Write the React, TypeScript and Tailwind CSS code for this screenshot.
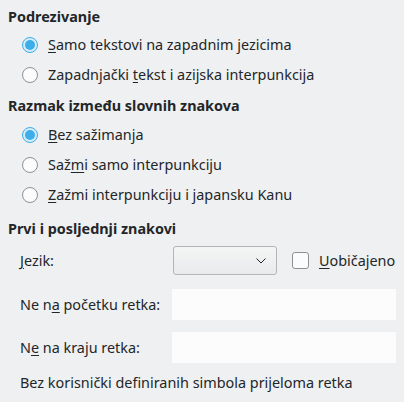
import { type FC, type ReactNode } from "react";

const Radio: FC<{ checked?: boolean; children: ReactNode }> = ({ checked, children }) => (
  <div className="flex items-center h-[30px] pl-[14px] gap-[10px]">
    {checked ? (
      <span className="w-[16px] h-[16px] rounded-full border border-[#3daee9] bg-[#d6ecf8] flex items-center justify-center">
        <span className="w-[10px] h-[10px] rounded-full bg-[#3daee9]" />
      </span>
    ) : (
      <span className="w-[16px] h-[16px] rounded-full border border-[#8e9091] bg-[#fcfcfc]" />
    )}
    <span>{children}</span>
  </div>
);

const U: FC<{ children: ReactNode }> = ({ children }) => <span className="underline underline-offset-2">{children}</span>;

const App: FC = () => {
  return (
    <div className="w-[404px] h-[402px] bg-[#eff0f1] text-[#232629] text-[14.4px] leading-[20px] overflow-hidden" style={{ fontFamily: '"Noto Sans", sans-serif' }}>
      <div className="pt-[7px] px-[8px]">
        <div className="font-bold h-[20px]">Podrezivanje</div>
        <div className="mt-[3px]">
          <Radio checked><U>S</U>amo tekstovi na zapadnim jezicima</Radio>
          <Radio>Zapadnjački <U>t</U>ekst i azijska interpunkcija</Radio>
        </div>
        <div className="font-bold h-[20px] mt-[6px]">Razmak između slovnih znakova</div>
        <div className="mt-[4px]">
          <Radio checked><U>B</U>ez sažimanja</Radio>
          <Radio>Saž<U>m</U>i samo interpunkciju</Radio>
          <Radio><U>Z</U>ažmi interpunkciju i japansku Kanu</Radio>
        </div>
        <div className="font-bold h-[20px] mt-[9px]">Prvi i posljednji znakovi</div>
        <div className="flex items-center mt-[7px] h-[29px] pl-[12px]">
          <span className="w-[153px]"><U>J</U>ezik:</span>
          <div className="w-[104px] h-[29px] rounded-[3px] border border-[#b4b5b6] bg-gradient-to-b from-[#f4f5f5] to-[#e9eaeb] flex items-center justify-end pr-[10px]">
            <svg width="10" height="6" viewBox="0 0 10 6" fill="none" stroke="#232629" strokeWidth="1">
              <path d="M0.5 0.5 L5 5 L9.5 0.5" />
            </svg>
          </div>
          <span className="ml-[15px] w-[17px] h-[17px] rounded-[3px] border border-[#8e9091] bg-[#fcfcfc]" />
          <span className="ml-[10px]"><U>U</U>običajeno</span>
        </div>
        <div className="flex items-center mt-[14px] h-[31px] pl-[12px]">
          <span className="w-[152px]">Ne n<U>a</U> početku retka:</span>
          <div className="w-[224px] h-[31px] bg-[#fcfcfc]" />
        </div>
        <div className="flex items-center mt-[12px] h-[31px] pl-[12px]">
          <span className="w-[152px]">N<U>e</U> na kraju retka:</span>
          <div className="w-[224px] h-[31px] bg-[#fcfcfc]" />
        </div>
        <div className="mt-[10px] pl-[12px] h-[20px]">Bez korisnički definiranih simbola prijeloma retka</div>
      </div>
    </div>
  );
};

export default App;
